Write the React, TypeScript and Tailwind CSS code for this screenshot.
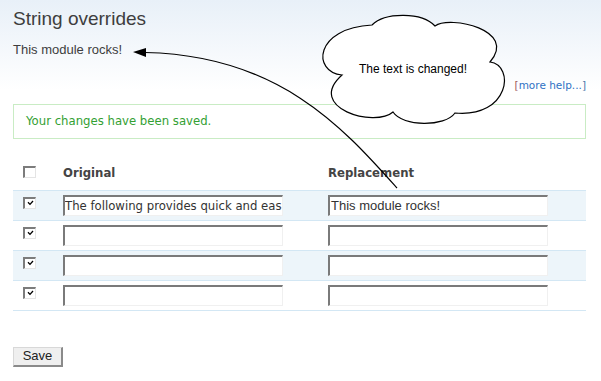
import React from "react";

const dv = "font-['DejaVu_Sans',Verdana,sans-serif]";

function Checkbox({ checked }: { checked?: boolean }) {
  return (
    <span className="flex w-[13px] h-[12px] items-center justify-center bg-white border-t-2 border-l-2 border-r border-b border-t-[#7c7c7c] border-l-[#7c7c7c] border-r-[#e4e4e4] border-b-[#e4e4e4]">
      {checked && (
        <svg width="7" height="6" viewBox="0 0 7 6">
          <path d="M1 2.2 L3 4.4 L6 1" fill="none" stroke="#000" strokeWidth="1.3" />
        </svg>
      )}
    </span>
  );
}

function Field({ value, sans }: { value?: string; sans?: boolean }) {
  return (
    <div
      className={`w-[220px] h-[21px] bg-white border-t-2 border-l-2 border-r border-b border-t-[#7a7a7a] border-l-[#7a7a7a] border-r-[#f0f0f0] border-b-[#f0f0f0] overflow-hidden whitespace-nowrap flex items-center text-[#333] ${
        sans ? "font-['Liberation_Sans',Arial,sans-serif] text-[13px] pl-[1px]" : `${dv} text-[11.7px]`
      }`}
    >
      {value ?? ""}
    </div>
  );
}

export default function App() {
  const rows = [
    { o: "The following provides quick and eas", r: "This module rocks!" },
    { o: "", r: "" },
    { o: "", r: "" },
    { o: "", r: "" },
  ];
  return (
    <div className="relative w-[601px] h-[381px] overflow-hidden bg-[linear-gradient(to_bottom,#e8f0f8_0px,#ffffff_90px)] font-['Liberation_Sans',Arial,sans-serif] text-[#494949]">
      <div className="ml-[13px] w-[573px] pt-[8px]">
        <h2 className="text-[19px] leading-[22px] font-normal text-[#3e3e3e]">String overrides</h2>
        <p className="mt-[11.5px] text-[13px] leading-[16px] text-[#3e3e3e]">This module rocks!</p>
        <div className={`mt-[21px] text-right text-[10.5px] leading-[13px] ${dv}`}>
          <span className="text-[#a05a5a]">[</span>
          <span className="text-[#2f72c4]">more help...</span>
          <span className="text-[#4a78a8]">]</span>
        </div>
        <div className={`mt-[12px] h-[35px] border border-[#c9ecc4] flex items-center pl-[12px] text-[#33a033] text-[11.7px] leading-[16px] ${dv}`}>
          Your changes have been saved.
        </div>

        <div className={`mt-[18px] ${dv} text-[11.7px] leading-[16px]`}>
          <div className="grid grid-cols-[50px_265px_1fr] h-[34px] border-b border-[#d3e7f4]">
            <div className="pl-[10px] pt-[9px]">
              <Checkbox />
            </div>
            <div className="pt-[8px] font-bold text-[#444]">Original</div>
            <div className="pt-[8px] font-bold text-[#444]">Replacement</div>
          </div>
          {rows.map((r, i) => (
            <div
              key={i}
              className={`grid grid-cols-[50px_265px_1fr] h-[30px] border-b border-[#d3e7f4] ${
                i % 2 === 0 ? "bg-[#edf5fa]" : "bg-white"
              }`}
            >
              <div className="pl-[10px] pt-[6px]">
                <Checkbox checked />
              </div>
              <div className="pt-[4px]">
                <Field value={r.o} />
              </div>
              <div className="pt-[4px]">
                <Field value={r.r} sans />
              </div>
            </div>
          ))}
        </div>

        <button className="mt-[36px] w-[50px] h-[20px] bg-[#efefef] border-t border-l border-t-[#d8d8d8] border-l-[#d8d8d8] border-r-2 border-b-2 border-r-[#8a8a8a] border-b-[#8a8a8a] text-[13px] leading-[16px] text-[#222] font-['Liberation_Sans',Arial,sans-serif]">
          Save
        </button>
      </div>

      <svg className="absolute left-0 top-0 pointer-events-none" width="601" height="381" viewBox="0 0 601 381">
        <path
          d="M342,75 C312,72 314,28 372,25 C385,12 422,12 435,26 C450,15 518,30 490,62 C515,65 510,118 455,113 C445,127 403,127 393,112 C375,128 305,108 342,75 Z"
          fill="#fff"
          stroke="#000"
          strokeWidth="1.2"
        />
        <path d="M397,188 C345,130 280,55 145,52.5" fill="none" stroke="#000" strokeWidth="1.2" />
        <polygon points="133,52 146,48 146,57" fill="#000" />
      </svg>
      <div className="absolute left-[343px] top-[61px] w-[140px] text-center text-[12px] leading-[16px] text-black font-['Liberation_Sans',Arial,sans-serif]">
        The text is changed!
      </div>
    </div>
  );
}
